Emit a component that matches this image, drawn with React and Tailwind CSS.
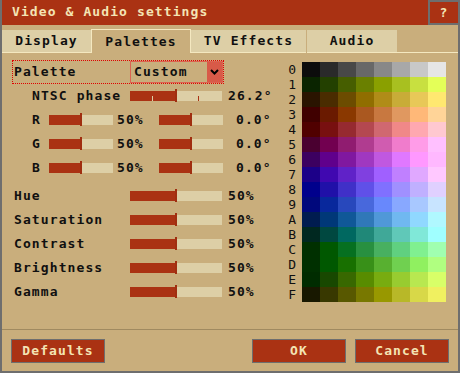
import React from 'react';

const PALETTE = [
  ['#0c0c0c', '#2a2a2a', '#484848', '#686868', '#888888', '#a8a8a8', '#c8c8c8', '#e6e6e6'],
  ['#0a2400', '#234000', '#465e00', '#6a8000', '#8aa000', '#a8c020', '#c8e040', '#e4ff58'],
  ['#2a1400', '#4a2c00', '#6c4c00', '#906e00', '#b08c18', '#c8ac38', '#e8c858', '#ffe870'],
  ['#400000', '#6a1a00', '#8a3800', '#aa5820', '#c87840', '#e09860', '#ffb878', '#ffd498'],
  ['#500000', '#781010', '#962a30', '#b44850', '#d06870', '#f08888', '#ffa8b0', '#ffc8d0'],
  ['#4a0030', '#720050', '#901c70', '#b03c90', '#d05cb0', '#f07ccc', '#ff9ce8', '#ffc0ff'],
  ['#3c0060', '#60008c', '#8018a0', '#a038c0', '#c058e0', '#e078ff', '#ff98ff', '#ffb8ff'],
  ['#1c0088', '#4008b0', '#6022c8', '#8040e0', '#a060ff', '#c080ff', '#e0a8ff', '#ffc8ff'],
  ['#00008c', '#2010a8', '#4030c8', '#6050e8', '#8070ff', '#a090ff', '#c0b0ff', '#e0d0ff'],
  ['#00087c', '#08289c', '#2848bc', '#4868dc', '#6888fc', '#88a8ff', '#a8c8ff', '#c8e4ff'],
  ['#001c50', '#003878', '#105898', '#3078b8', '#5098d8', '#70b8f0', '#90d8ff', '#b0f8ff'],
  ['#002820', '#004840', '#006860', '#208878', '#40a898', '#60c8b8', '#80e8d8', '#a0ffff'],
  ['#003000', '#005800', '#067020', '#289040', '#48b060', '#60d080', '#80f090', '#a0ffb0'],
  ['#003000', '#005800', '#187000', '#389018', '#58b030', '#70d050', '#90f060', '#b0ff80'],
  ['#002c00', '#184800', '#386800', '#588c00', '#78ac10', '#98cc30', '#b8e850', '#d8ff68'],
  ['#181800', '#383800', '#585800', '#787800', '#989800', '#b8b828', '#d8d848', '#f0f060'],
];
const HEX = '0123456789ABCDEF'.split('');

function Slider({ className, pct, ticks }) {
  return (
    <div className={`relative h-[10px] shrink-0 bg-[#ddcfa6] ${className}`}>
      <div className="h-full bg-[#aa3213]" style={{ width: `${pct}%` }} />
      <div
        className="absolute top-[-2px] bottom-[-1px] w-[2px] bg-[#a02e10]"
        style={{ left: `calc(${pct}% - 1px)` }}
      />
      {ticks && (
        <>
          <div className="absolute left-[22px] top-[5px] h-[5px] w-[1px] bg-[#ddcfa6]" />
          <div className="absolute left-[68px] top-[5px] h-[5px] w-[1px] bg-[#aa3213]" />
        </>
      )}
    </div>
  );
}

function Tab({ label, active, className }) {
  if (active) {
    return (
      <div className={`flex shrink-0 items-center justify-center border-x border-t border-[#f4e8c0] ${className}`}>
        {label}
      </div>
    );
  }
  return (
    <div className={`flex shrink-0 flex-col ${className}`}>
      <div className="mt-[1px] flex flex-1 items-center justify-center bg-[#ddcfa6]">{label}</div>
      <div className="h-[1px] bg-[#f4e8c0]" />
    </div>
  );
}

function ColorRow({ label, pct = 50 }) {
  return (
    <div className="flex h-[24px] items-center pl-[2px]">
      <div className="w-[116px] shrink-0">{label}</div>
      <Slider className="w-[92px]" pct={pct} />
      <div className="ml-[6px] shrink-0">{pct}%</div>
    </div>
  );
}

function RgbRow({ label }) {
  return (
    <div className="flex h-[24px] items-center pl-[20px]">
      <div className="w-[17px] shrink-0">{label}</div>
      <Slider className="w-[64px]" pct={50} />
      <div className="ml-[4px] w-[42px] shrink-0">50%</div>
      <Slider className="w-[64px]" pct={50} />
      <div className="ml-[13px] shrink-0">0.0°</div>
    </div>
  );
}

export default function App() {
  return (
    <div className="w-[460px] h-[373px] overflow-hidden">
      <div className="flex h-[373px] w-[460px] flex-col whitespace-nowrap border-x-2 border-b-2 border-[#6e6e6e] bg-[#c9ae7c] font-['DejaVu_Sans_Mono',monospace] text-[13px] font-bold tracking-[1.1px] text-[#101010]">
        {/* title bar */}
        <div className="flex h-[25px] shrink-0 bg-[#aa3213] text-[#f4e4b4]">
          <div className="flex flex-1 items-center pl-[10px] pb-[1px]">Video &amp; Audio settings</div>
          <div className="flex w-[30px] items-center justify-center border-y-2 border-l-2 border-[#6e6e6e]">?</div>
        </div>

        {/* tabs */}
        <div className="mt-[4px] flex h-[24px] shrink-0">
          <Tab label="Display" className="w-[89px]" />
          <Tab label="Palettes" active className="w-[100px]" />
          <Tab label="TV Effects" className="w-[116px] border-r border-[#c9ae7c]" />
          <Tab label="Audio" className="w-[90px]" />
          <div className="flex flex-1 flex-col justify-end">
            <div className="h-[1px] bg-[#f4e8c0]" />
          </div>
        </div>

        {/* content */}
        <div className="flex h-[276px] shrink-0 pt-[7px]">
          <div className="ml-[10px] w-[213px] shrink-0">
            <div className="flex h-[24px] w-[212px] border border-dotted border-[#e00000]">
              <div className="flex w-[117px] shrink-0 items-center pl-[1px]">Palette</div>
              <div className="flex flex-1 border border-[#dc6250]">
                <div className="flex flex-1 items-center pl-[3px]">Custom</div>
                <div className="flex w-[15px] items-center justify-center bg-[#d85a48]">
                  <svg width="9" height="6" viewBox="0 0 9 6">
                    <polyline points="1,1 4.5,4.5 8,1" fill="none" stroke="#000" strokeWidth="2" />
                  </svg>
                </div>
              </div>
            </div>

            <div className="flex h-[24px] items-center pl-[20px]">
              <div className="w-[98px] shrink-0">NTSC phase</div>
              <Slider className="w-[92px]" pct={50} ticks />
              <div className="ml-[6px] shrink-0">26.2°</div>
            </div>
            <RgbRow label="R" />
            <RgbRow label="G" />
            <RgbRow label="B" />

            <div className="mt-[4px]">
              <ColorRow label="Hue" />
              <ColorRow label="Saturation" />
              <ColorRow label="Contrast" />
              <ColorRow label="Brightness" />
              <ColorRow label="Gamma" />
            </div>
          </div>

          {/* palette grid */}
          <div className="ml-[58px] mt-[2px] flex shrink-0 flex-col">
            {PALETTE.map((row, i) => (
              <div key={i} className="flex h-[15px] items-center">
                <div className="w-[14px] pr-[1px] text-right text-[13px] font-normal tracking-normal">{HEX[i]}</div>
                <div className="ml-[5px] flex h-full">
                  {row.map((c, j) => (
                    <div key={j} className="h-full w-[18px]" style={{ backgroundColor: c }} />
                  ))}
                </div>
              </div>
            ))}
          </div>
        </div>

        {/* footer */}
        <div className="h-[1px] shrink-0 bg-[#a08a60]" />
        <div className="mt-[9px] flex justify-between px-[9px] text-[#f4e4b4]">
          <button className="flex h-[24px] w-[94px] items-center justify-center border border-[#6e6e6e] bg-[#aa3213]">Defaults</button>
          <div className="flex gap-[9px]">
            <button className="flex h-[24px] w-[94px] items-center justify-center border border-[#6e6e6e] bg-[#aa3213]">OK</button>
            <button className="flex h-[24px] w-[94px] items-center justify-center border border-[#6e6e6e] bg-[#aa3213]">Cancel</button>
          </div>
        </div>
      </div>
    </div>
  );
}
